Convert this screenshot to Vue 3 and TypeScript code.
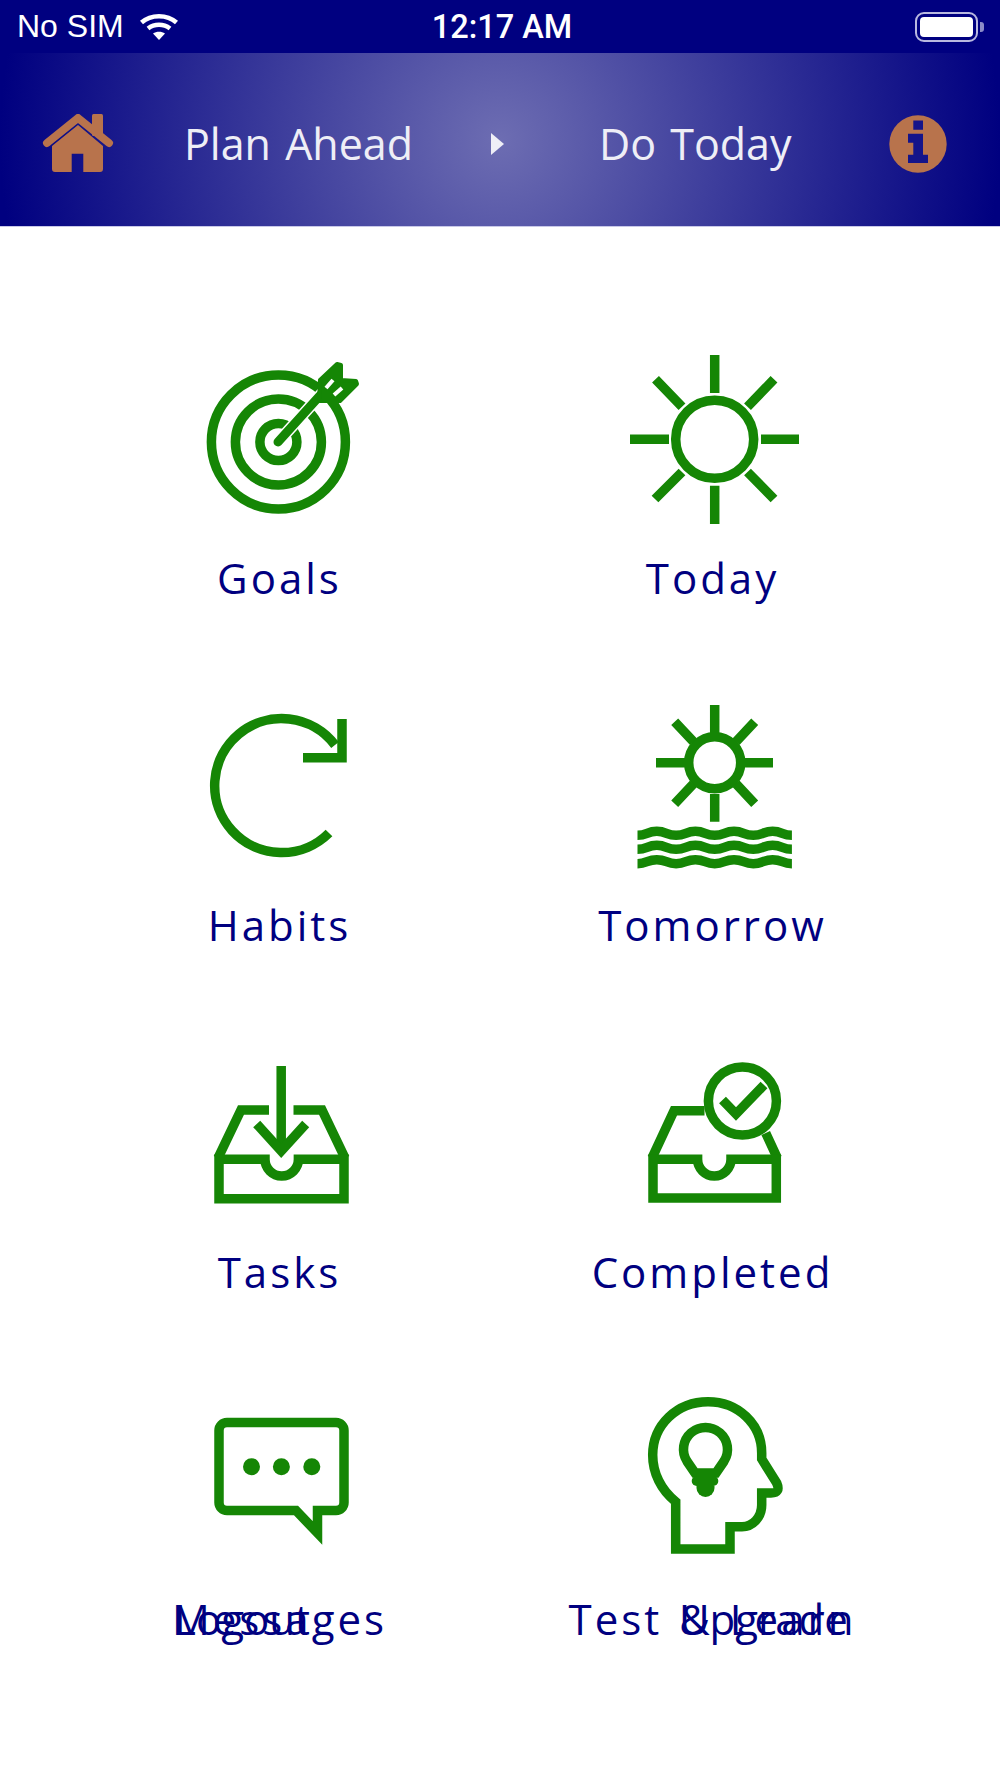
<template>
  <div class="screen">
    <div class="status-bar">
      <div class="status-left">
        <span>No SIM</span>
        <svg class="wifi" width="40" height="28" viewBox="0 0 40 28" fill="none" stroke="#fff" stroke-width="4.5">
          <path d="M2.5 9.5C12 1 28 1 37.5 9.5" />
          <path d="M9 15.5c6.5-5 15.5-5 22 0" />
          <path d="M20 27l-6-6.5c3.5-2.5 8.5-2.5 12 0z" fill="#fff" stroke="none" />
        </svg>
      </div>
      <span class="status-time">12:17 AM</span>
      <div class="battery">
        <div class="battery-fill"></div>
      </div>
    </div>

    <header class="nav">
      <svg class="home" width="72" height="60" viewBox="0 0 72 60">
        <path d="M5 29L36 4L67 29" fill="none" stroke="#b8734c" stroke-width="8" stroke-linecap="round" stroke-linejoin="round" />
        <rect x="50" y="0" width="11" height="22" rx="1.5" fill="#b8734c" />
        <path d="M36 11L61 32V55q0 3-3 3H41.3V39.7H29.7V58H13q-3 0-3-3V32z" fill="#b8734c" />
      </svg>
      <span class="nav-link">Plan Ahead</span>
      <svg class="arrow" width="13" height="22" viewBox="0 0 13 22">
        <path d="M0 0L13 11L0 22z" fill="#eeeef6" />
      </svg>
      <span class="nav-link">Do Today</span>
      <svg class="info" width="58" height="58" viewBox="0 0 58 58">
        <circle cx="29" cy="29" r="28.7" fill="#b8734c" />
        <path d="M24.3 5.5H34V14.8H24.3zM19 18.8H34V39.8H39V48.1H19V39.8H24.3V27.8H19z" fill="#14148a" />
      </svg>
    </header>

    <main class="menu">
      <div class="menu-item">
        <svg class="icon" width="190" height="180" viewBox="0 0 190 180" fill="none">
          <circle cx="93.4" cy="92" r="67" />
          <circle cx="93.4" cy="92" r="43" />
          <circle cx="93.4" cy="92" r="18.5" />
          <path class="halo" d="M93 92L140 40" />
          <path class="shaft" d="M93 92L140 40" />
          <path class="head" d="M135 30L152 14L156 15V30L171 31L172 34L155 51H134z" />
          <path class="slit" d="M141 38L148 30M149 45L157 38" />
        </svg>
        <span class="label">Goals</span>
      </div>

      <div class="menu-item">
        <svg class="icon" width="190" height="180" viewBox="0 0 190 180" fill="none">
          <circle cx="96.7" cy="89.3" r="39" />
          <path d="M96.7 5V43M96.7 135.7V174M12 89.3H51M143 89.3H181M37.5 29.3L64 56.7M156 29.3L129.5 56.7M37 149L64 122M156 149L129.5 122" />
        </svg>
        <span class="label">Today</span>
      </div>

      <div class="menu-item">
        <svg class="icon" width="190" height="180" viewBox="0 0 190 180" fill="none">
          <path d="M144 136A67 67 0 1 1 150 48" />
          <path d="M118 60.7H157V22" />
        </svg>
        <span class="label">Habits</span>
      </div>

      <div class="menu-item">
        <svg class="icon" width="190" height="180" viewBox="0 0 190 180" fill="none">
          <circle cx="96.7" cy="65.7" r="26" />
          <path d="M96.7 8V36M96.7 97V124.7M38 65.7H67M127 65.7H155M56.7 24.7L75.5 44.7M136.7 24.7L118 44.7M56.7 106.7L75.5 86.7M136.7 106.7L118 86.7" />
          <path v-for="y in waveRows" :key="y" :d="wavePath(y)" />
        </svg>
        <span class="label">Tomorrow</span>
      </div>

      <div class="menu-item">
        <svg class="icon" width="190" height="180" viewBox="0 0 190 180" fill="none">
          <path d="M96.2 22V105" />
          <path d="M71.7 80L96.2 107L120.7 80" />
          <path d="M84 66H56L33 114M108.5 66H137L160 114" />
          <path d="M34 115.3H80a16.7 16.7 0 0 0 33.4 0H159V154.8H34z" />
        </svg>
        <span class="label">Tasks</span>
      </div>

      <div class="menu-item">
        <svg class="icon" width="190" height="180" viewBox="0 0 190 180" fill="none">
          <path d="M86.5 66.7H56L34 114M147.7 89L159.3 114" />
          <path d="M35 115.3H79.6a16.7 16.7 0 0 0 33.4 0H158.3V154H35z" />
          <circle cx="124.4" cy="57" r="34" />
          <path d="M104.5 56L118 70L146 41" />
        </svg>
        <span class="label">Completed</span>
      </div>

      <div class="menu-item">
        <svg class="icon" width="190" height="180" viewBox="0 0 190 180" fill="none">
          <path d="M42 31.5H151a8 8 0 0 1 8 8V111.5a8 8 0 0 1-8 8H132.5V142L111 119.5H42a8 8 0 0 1-8-8V39.5a8 8 0 0 1 8-8z" />
          <circle class="dot" cx="66.5" cy="75.7" r="8.5" />
          <circle class="dot" cx="96.4" cy="75.7" r="8.5" />
          <circle class="dot" cx="126.8" cy="75.7" r="8.5" />
        </svg>
        <span class="label">Messages</span>
        <span class="label label-over logout">Logout</span>
      </div>

      <div class="menu-item">
        <svg class="icon" width="190" height="180" viewBox="0 0 190 180" fill="none">
          <path d="M57.7 158V110.7C43 99 34.7 82 34.7 64C34.7 34 59 10.7 90 10.7C120 10.7 143.7 33 143.7 62V68L158.7 92Q163 102 153 102H143.7V114C143.7 126 135 135.7 124 135.7H112V158z" />
          <path d="M77 82L69 70.3A22 22 0 1 1 106 70.3L98 82z" />
          <rect class="dot" x="73.7" y="85" width="26.6" height="10" rx="5" />
          <path class="dot" d="M78.5 95H96.5V97A9 9 0 0 1 78.5 97z" />
        </svg>
        <span class="label">Test &amp; Learn</span>
        <span class="label label-over upgrade">Upgrade</span>
      </div>
    </main>
  </div>
</template>

<script setup lang="ts">
const waveRows = [136.3, 150.3, 164.7]

// eight half periods of the same curve, one path per row
function wavePath(y: number): string {
  const up = 'c9.6 0 9.6-4 19.3-4'
  const down = 's9.6 4 19.3 4'
  let d = `M19.5 ${y + 2}${up}`
  for (let i = 0; i < 3; i++) d += `${down}s9.6-4 19.3-4`
  return d + down
}
</script>

<style>
html, body {
  margin: 0;
  background: #fff;
}
</style>

<style scoped>
.screen {
  width: 1000px;
  height: 1778px;
  background: #fff;
  overflow: hidden;
  font-family: "Open Sans", sans-serif;
}

/* ── Status bar ── */
.status-bar {
  height: 53px;
  background: #000080;
  color: #fff;
  display: grid;
  grid-template-columns: 1fr auto 1fr;
  align-items: center;
  padding: 0 22px 0 17px;
  font-family: "Liberation Sans", sans-serif;
  font-size: 32px;
}

.status-left {
  display: flex;
  align-items: center;
  gap: 15px;
}

.status-time {
  margin-left: 9px;
  font-family: Roboto, sans-serif;
  font-size: 32.5px;
  font-weight: 500;
}

.battery {
  justify-self: end;
  position: relative;
  width: 63px;
  height: 30px;
  box-sizing: border-box;
  border: 2px solid #b9b9e0;
  border-radius: 9px;
  padding: 3px;
}

.battery::after {
  content: '';
  position: absolute;
  right: -8px;
  top: 8px;
  width: 4px;
  height: 10px;
  background: #8c8cc8;
  border-radius: 0 3px 3px 0;
}

.battery-fill {
  height: 100%;
  background: #fff;
  border-radius: 4px;
}

/* ── Header ── */
.nav {
  height: 174px;
  box-sizing: border-box;
  padding: 8px 0 0 42px;
  display: grid;
  grid-template-columns: 142px 307px 108px 290px 58px;
  align-items: center;
  border-bottom: 1px solid #c8c8e8;
  background: radial-gradient(ellipse 500px 500px at 500px 87px, #6d6db2 0%, #000080 100%);
}

.nav-link {
  color: #eeeef6;
  font-size: 43px;
  line-height: 1;
  word-spacing: 3px;
  white-space: nowrap;
}

/* ── Menu ── */
.menu {
  display: grid;
  grid-template-columns: 433px 433px;
  grid-auto-rows: 347px;
  padding: 123px 0 0 63px;
}

.menu-item {
  position: relative;
  display: flex;
  flex-direction: column;
  align-items: center;
}

.icon {
  flex: none;
  overflow: visible;
  stroke: #158605;
  stroke-width: 9.5;
}

.icon .dot {
  fill: #158605;
  stroke: none;
}

.icon .halo {
  stroke: #fff;
  stroke-width: 12;
}

.icon .shaft {
  stroke-width: 9;
  stroke-linecap: round;
}

.icon .head {
  fill: #158605;
  stroke-width: 4;
  stroke-linejoin: round;
}

.icon .slit {
  stroke: #fff;
  stroke-width: 4;
}

.label {
  margin-top: 21px;
  color: #000080;
  font-size: 42px;
  line-height: 54px;
  letter-spacing: 3px;
  word-spacing: 3px;
  white-space: nowrap;
}

.label-over {
  position: absolute;
  top: 180px;
  letter-spacing: 0;
}

.logout {
  left: 111px;
}

.upgrade {
  left: 183px;
}
</style>
